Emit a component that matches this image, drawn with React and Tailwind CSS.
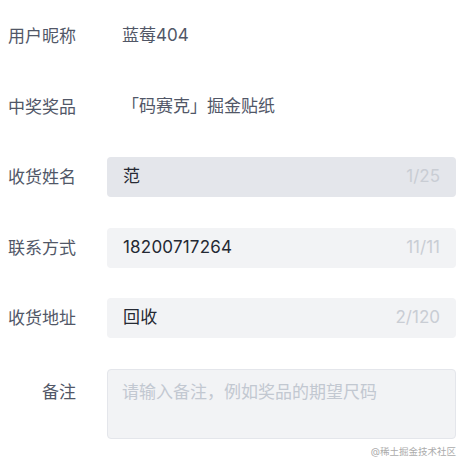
const fields = [
  { label: '收货姓名', value: '范', count: '1/25', active: true },
  { label: '联系方式', value: '18200717264', count: '11/11' },
  { label: '收货地址', value: '回收', count: '2/120' },
]

const Label = ({ children, className = '' }) => (
  <div className={`w-[76px] shrink-0 text-right text-[#515767] leading-[24px] ${className}`}>
    {children}
  </div>
)

const App = () => {
  return (
    <div
      className="w-[460px] h-[460px] bg-white pt-[16px] flex flex-col text-[17px]"
      style={{ fontFamily: 'Inter, "Noto Sans CJK SC", sans-serif' }}
    >
      <div className="flex flex-col gap-[30.5px] pr-[4px]">
        <div className="flex items-center gap-[31px] h-[40px]">
          <Label>用户昵称</Label>
          <div className="px-[15px] text-[#515767]">蓝莓404</div>
        </div>

        <div className="flex items-center gap-[31px] h-[40px]">
          <Label>中奖奖品</Label>
          <div className="px-[15px] text-[#515767]">「码赛克」掘金贴纸</div>
        </div>

        {fields.map((f) => (
          <div key={f.label} className="flex items-center gap-[31px] h-[40px]">
            <Label>{f.label}</Label>
            <div
              className={`flex-1 h-full rounded-[4px] flex items-center justify-between pl-[16px] pr-[16px] ${
                f.active ? 'bg-[#e4e6eb]' : 'bg-[#f2f3f5]'
              }`}
            >
              <span className="text-[#252933] tracking-[0.2px]">{f.value}</span>
              <span className="text-[#c9cdd4]">{f.count}</span>
            </div>
          </div>
        ))}

        <div className="flex items-start gap-[31px]">
          <Label className="pt-[11px]">备注</Label>
          <div className="flex-1 h-[70px] rounded-[4px] bg-[#f2f3f5] border border-[#e4e6eb] px-[14px] pt-[10px] leading-[24px] text-[#c2c8d1]">
            请输入备注，例如奖品的期望尺码
          </div>
        </div>
      </div>

      <div className="mt-[7px] pr-[4px] text-right text-[9.5px] leading-[12px] text-[#ababab]">
        @稀土掘金技术社区
      </div>
    </div>
  )
}

export default App
